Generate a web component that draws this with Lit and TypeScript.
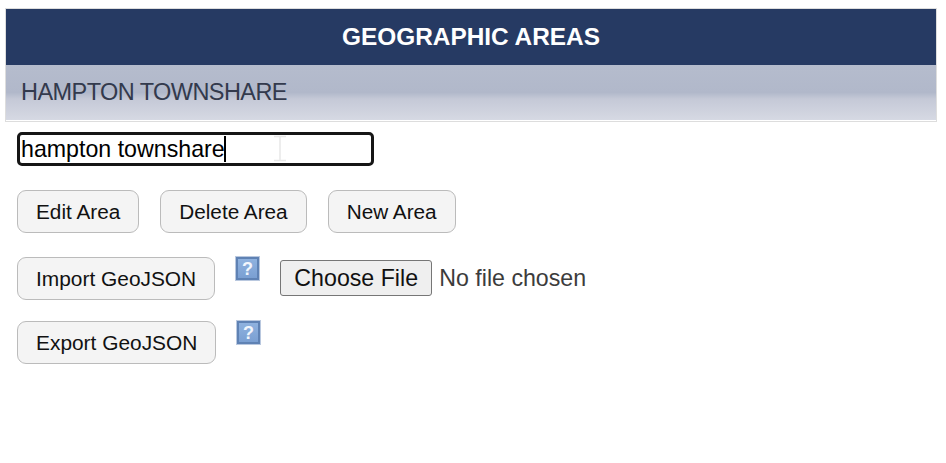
import { LitElement, html, css, svg } from "lit";
import { customElement } from "lit/decorators.js";

const helpIcon = svg`<svg class="help" width="25" height="25" viewBox="0 0 25 25" aria-hidden="true">
  <defs><linearGradient id="hb" x1="0" y1="0" x2="0" y2="1"><stop offset="0" stop-color="#8fb2df"/><stop offset="1" stop-color="#7a9fd2"/></linearGradient></defs>
  <rect x="0" y="0" width="25" height="25" fill="#b9c8df"/>
  <rect x="1" y="1" width="23" height="23" fill="#5f82b4"/>
  <rect x="3" y="3" width="19" height="19" fill="url(#hb)"/>
  <text x="12.5" y="18.5" text-anchor="middle" font-family="Liberation Sans, sans-serif" font-weight="700" font-size="18" fill="#f2f6fc">?</text>
</svg>`;

@customElement("app-root")
export class AppRoot extends LitElement {
  static styles = css`
    :host {
      display: block;
      width: 946px;
      height: 463px;
      background: #fff;
      font-family: "Liberation Sans", Arial, sans-serif;
      color: #000;
      box-sizing: border-box;
      padding-top: 8px;
      overflow: hidden;
    }
    .panel {
      margin: 0 9px 0 5px;
      border: 1px solid #ddd;
    }
    .title {
      height: 56px;
      box-sizing: border-box;
      padding-bottom: 1px;
      background: #263a63;
      color: #fff;
      font-weight: 700;
      font-size: 24.4px;
      display: flex;
      align-items: center;
      justify-content: center;
    }
    .sub {
      height: 55px;
      box-sizing: border-box;
      margin-bottom: 1px;
      background: linear-gradient(#b5bccd 0, #b1b8ca 50%, #c5c9d7 62%, #d6d9e3 100%);
      color: #333a4d;
      font-size: 23.5px;
      letter-spacing: -0.56px;
      padding: 0 0 1px 15px;
      display: flex;
      align-items: center;
    }
    .content {
      padding: 10px 0 0 17px;
      display: flex;
      flex-direction: column;
      align-items: flex-start;
    }
    .field {
      position: relative;
      width: 357px;
      height: 34px;
      margin-bottom: 24px;
    }
    input.name {
      width: 100%;
      height: 100%;
      box-sizing: border-box;
      border: 3px solid #161616;
      border-radius: 5px;
      outline: none;
      padding: 0 1px;
      margin: 0;
      font: 23.2px "Liberation Sans", Arial, sans-serif;
      color: #000;
      background: #fff;
    }
    .caret {
      position: absolute;
      left: 207px;
      top: 4px;
      width: 2px;
      height: 26px;
      background: #000;
    }
    .ibeam {
      position: absolute;
      left: 256px;
      top: 3px;
    }
    .row {
      display: flex;
      align-items: flex-start;
      height: 43px;
      margin-bottom: 24px;
    }
    .row.first {
      gap: 21px;
    }
    .row.first button {
      font-size: 20.75px;
    }
    .row.last {
      margin-top: -3px;
    }
    button {
      height: 43px;
      box-sizing: border-box;
      padding: 0 18px;
      margin: 0;
      background: #f4f4f4;
      border: 1px solid #bbb;
      border-radius: 9px;
      font: 20.9px "Liberation Sans", Arial, sans-serif;
      color: #111;
    }
    .help {
      display: block;
      flex: none;
    }
    .import-help {
      margin: -1px 20px 0 20px;
    }
    .export-help {
      margin: -1px 0 0 20px;
    }
    .file {
      display: flex;
      align-items: center;
      height: 36px;
      margin-top: 3px;
      font-size: 23.2px;
      color: #3c3c3c;
    }
    .file button {
      height: 36px;
      width: 152px;
      padding: 0;
      background: #efefef;
      border: 1px solid #767676;
      border-radius: 3px;
      font-size: 23.2px;
      color: #111;
      margin-right: 7px;
    }
  `;

  render() {
    return html`
      <div class="panel">
        <div class="title">GEOGRAPHIC AREAS</div>
        <div class="sub">HAMPTON TOWNSHARE</div>
      </div>
      <div class="content">
        <div class="field">
          <input class="name" type="text" .value=${"hampton townshare"} />
          <span class="caret"></span>
          <svg class="ibeam" width="14" height="27" viewBox="0 0 14 27" aria-hidden="true">
            <path d="M1 1.5h12M7 1v25M1 25.5h12" fill="none" stroke="#e8e8e8" stroke-width="1.5"/>
          </svg>
        </div>
        <div class="row first">
          <button>Edit Area</button>
          <button>Delete Area</button>
          <button>New Area</button>
        </div>
        <div class="row">
          <button>Import GeoJSON</button>
          <span class="import-help">${helpIcon}</span>
          <div class="file"><button>Choose File</button><span>No file chosen</span></div>
        </div>
        <div class="row last">
          <button>Export GeoJSON</button>
          <span class="export-help">${helpIcon}</span>
        </div>
      </div>
    `;
  }
}
